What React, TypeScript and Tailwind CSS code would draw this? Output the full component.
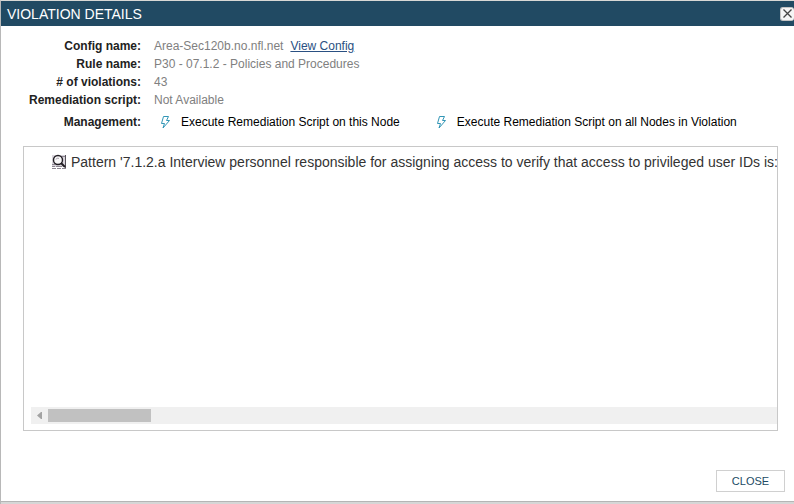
import type { ReactNode } from "react";

const details = [
  { label: "Rule name:", value: "P30 - 07.1.2 - Policies and Procedures" },
  { label: "# of violations:", value: "43" },
  { label: "Remediation script:", value: "Not Available" },
];

function BoltIcon() {
  return (
    <svg className="h-4 w-3 shrink-0" viewBox="0 0 12 16" fill="none" stroke="#3296b6" aria-hidden="true">
      <path d="M4.5 2.5H9.5L7.5 6.5H10.5L4 14L5.5 9.5H2.5Z" />
    </svg>
  );
}

function PatternIcon() {
  return (
    <svg className="h-4 w-4 shrink-0" viewBox="0 0 16 16" fill="none" aria-hidden="true">
      <path d="M1 1H14V13H1Z" fill="#d9d5dc" />
      <path d="M14.5 1V15" stroke="#555058" />
      <path d="M1 12.5H4M5 12.5H11M1 14.5H5M6 14.5H10M11 14.5H15" stroke="#8d8691" />
      <path d="M1 10.5H4M11 2.5H14" stroke="#8d8691" />
      <circle cx="7" cy="6" r="4.5" fill="#f8f7f8" stroke="#211d23" strokeWidth="1.4" />
      <path d="M5 5.5C5.5 4 6.5 4 8 4.5" stroke="#aaa3ad" />
      <path d="M10 9L14 13" stroke="#211d23" strokeWidth="2" />
    </svg>
  );
}

function DetailRow({ label, children }: { label: string; children: ReactNode }) {
  return (
    <div className="flex h-[18px] items-center">
      <dt className="w-[118px] shrink-0 text-right font-bold whitespace-nowrap text-[#222]">{label}</dt>
      <dd className="ml-[13px] whitespace-nowrap text-[#808080]">{children}</dd>
    </div>
  );
}

function ActionButton({ children }: { children: ReactNode }) {
  return (
    <button type="button" className="flex items-center gap-2.5 text-black">
      <BoltIcon />
      <span>{children}</span>
    </button>
  );
}

export default function App() {
  return (
    <div className="flex min-h-screen flex-col border-t border-l border-t-[#d8d8d5] border-l-[#b8b8b8] bg-white font-['Liberation_Sans',Arial,sans-serif] text-xs leading-[18px]">
      <header className="flex h-[25px] items-center justify-between bg-[#214a63] pl-1.5">
        <h1 className="text-sm text-white">VIOLATION DETAILS</h1>
        <button type="button" aria-label="Close dialog" className="flex h-3.5 w-3.5 items-center justify-center rounded-[3px] border border-r-0 border-[#c4c4c4] bg-[#f5f5f5]">
          <svg className="h-[9px] w-[9px]" viewBox="0 0 9 9" fill="none" stroke="#444" strokeWidth="1.3" aria-hidden="true">
            <path d="M0.5 0.5L8.5 8.5M8.5 0.5L0.5 8.5" />
          </svg>
        </button>
      </header>

      <main className="flex grow flex-col pt-[11px]">
        <dl className="pl-[22px]">
          <DetailRow label="Config name:">
            Area-Sec120b.no.nfl.net
            <a href="#config" className="ml-[7px] text-[#2a5082] underline">View Config</a>
          </DetailRow>
          {details.map((item) => (
            <DetailRow key={item.label} label={item.label}>{item.value}</DetailRow>
          ))}
          <div className="mt-1 flex h-[18px] items-center">
            <dt className="w-[118px] shrink-0 text-right font-bold text-[#222]">Management:</dt>
            <dd className="ml-[18px] flex gap-[35px] whitespace-nowrap">
              <ActionButton>Execute Remediation Script on this Node</ActionButton>
              <ActionButton>Execute Remediation Script on all Nodes in Violation</ActionButton>
            </dd>
          </div>
        </dl>

        <section className="mt-[15px] mr-4 ml-[22px] flex h-[285px] flex-col justify-between border border-[#c8c8c8] py-1.5 pl-[7px]">
          <div className="flex items-center gap-1 overflow-hidden pl-5 text-sm leading-[18px] whitespace-nowrap text-[#333]">
            <PatternIcon />
            <p>Pattern '7.1.2.a Interview personnel responsible for assigning access to verify that access to privileged user IDs is:</p>
          </div>
          <div className="flex h-[17px] items-center bg-[#f0f0f0]">
            <div className="flex w-[17px] justify-center">
              <svg className="h-[7px] w-[5px]" viewBox="0 0 5 7" fill="#a3a3a3" aria-hidden="true">
                <path d="M5 0V7H4L0 3.5L4 0Z" />
              </svg>
            </div>
            <div className="h-[13px] w-[103px] bg-[#c1c1c1]" />
          </div>
        </section>

        <footer className="mt-auto flex justify-end pr-[9px] pb-[9px]">
          <button type="button" className="h-[22px] w-[69px] border border-[#d0d0d0] text-[11px] text-[#214a63]">CLOSE</button>
        </footer>
      </main>
      <div className="h-[3px] border-t border-[#b5b5b5] bg-[#d6d6d6]" />
    </div>
  );
}
